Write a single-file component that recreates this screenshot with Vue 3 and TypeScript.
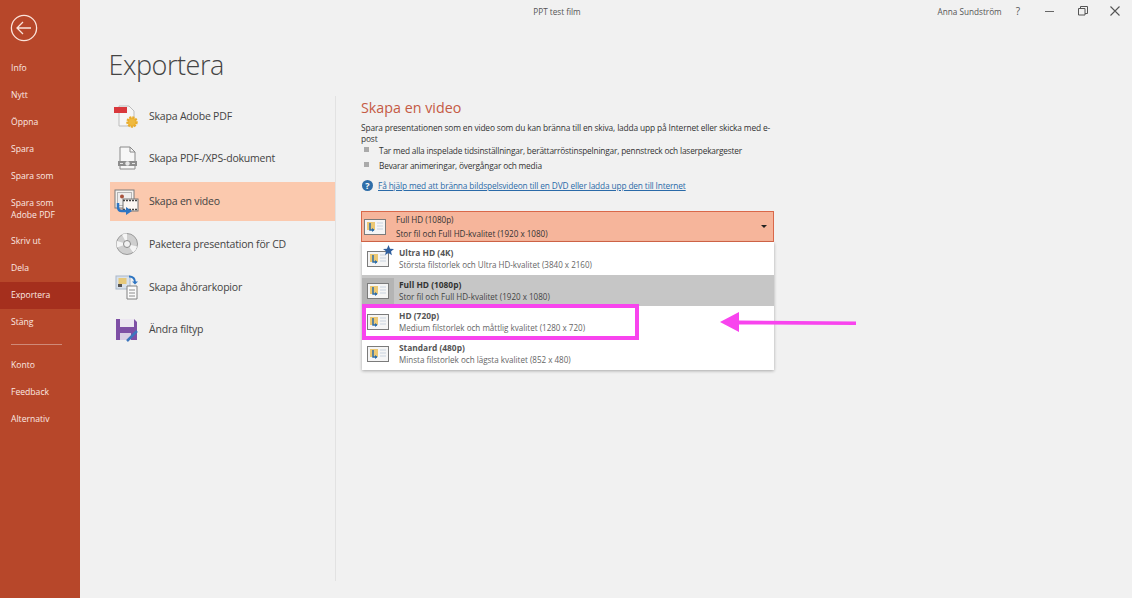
<script setup lang="ts">
interface Nav { label: string; active?: boolean; tall?: boolean }
const navTop: Nav[] = [
  { label: 'Info' }, { label: 'Nytt' }, { label: 'Öppna' }, { label: 'Spara' }, { label: 'Spara som' },
  { label: 'Spara som\nAdobe PDF', tall: true }, { label: 'Skriv ut' }, { label: 'Dela' },
  { label: 'Exportera', active: true }, { label: 'Stäng' },
]
const navBottom: Nav[] = [{ label: 'Konto' }, { label: 'Feedback' }, { label: 'Alternativ' }]
const actions = [
  { id: 'pdf', label: 'Skapa Adobe PDF' },
  { id: 'xps', label: 'Skapa PDF-/XPS-dokument' },
  { id: 'video', label: 'Skapa en video', active: true },
  { id: 'cd', label: 'Paketera presentation för CD' },
  { id: 'handout', label: 'Skapa åhörarkopior' },
  { id: 'type', label: 'Ändra filtyp' },
]
const options = [
  { title: 'Ultra HD (4K)', sub: 'Största filstorlek och Ultra HD-kvalitet (3840 x 2160)', star: true },
  { title: 'Full HD (1080p)', sub: 'Stor fil och Full HD-kvalitet (1920 x 1080)', selected: true },
  { title: 'HD (720p)', sub: 'Medium filstorlek och måttlig kvalitet (1280 x 720)', marked: true },
  { title: 'Standard (480p)', sub: 'Minsta filstorlek och lägsta kvalitet (852 x 480)' },
]
</script>

<template>
  <div class="app">
    <aside class="side">
      <svg class="back" width="28" height="28" viewBox="0 0 28 28" fill="none" stroke="#fbe3da" stroke-width="1.3">
        <circle cx="14" cy="14" r="12.6" />
        <path d="M7 14h14M13 8l-6 6 6 6" />
      </svg>
      <nav class="nav">
        <div v-for="n in navTop" :key="n.label" class="nav-item" :class="{ on: n.active, tall: n.tall }">{{ n.label }}</div>
        <div class="nav-rule"></div>
        <div v-for="n in navBottom" :key="n.label" class="nav-item">{{ n.label }}</div>
      </nav>
    </aside>

    <main class="main">
      <header class="bar">
        <div class="doc">PPT test film</div>
        <div class="win">
          <span class="user">Anna Sundström</span>
          <span class="q">?</span>
          <svg width="10" height="10" viewBox="0 0 10 10" class="min"><path d="M0 5.5h9" stroke="#666" /></svg>
          <svg width="10" height="10" viewBox="0 0 10 10" class="max" fill="none" stroke="#555"><path d="M.5 2.5h6.5v6.5H.5zM2.5 2.5V.5h7v7H7" /></svg>
          <svg width="10" height="10" viewBox="0 0 10 10" class="close" stroke="#555" stroke-width="1.1"><path d="M.5.5l9 9M9.5.5l-9 9" /></svg>
        </div>
      </header>

      <h1 class="title">Exportera</h1>

      <div class="cols">
        <ul class="actions">
          <li v-for="a in actions" :key="a.id" class="action" :class="{ on: a.active }">
            <svg class="aicon" width="28" height="28" viewBox="0 0 28 28">
              <template v-if="a.id === 'pdf'">
                <path d="M7 4h10l5 5v15H7z" fill="#f6f6f6" stroke="#bdbdbd" />
                <rect x="2" y="5" width="13" height="6" fill="#d9383c" />
                <circle cx="20" cy="20" r="4.500" fill="#efb93f" stroke="#e9ac2c" stroke-width="2.500" stroke-dasharray="2 1" />
              </template>
              <template v-else-if="a.id === 'xps'">
                <path d="M8 3h10l5 5v17H8z" fill="#f7f7f7" stroke="#8a8a8a" />
                <path d="M18 3v5h5" fill="none" stroke="#8a8a8a" />
                <rect x="6" y="17" width="19" height="5" fill="#8d8d8d" />
                <circle cx="15.500" cy="19.500" r="2.200" fill="#e6e6e6" />
                <path d="M8 19.500h3M20 19.500h3" stroke="#e6e6e6" />
              </template>
              <template v-else-if="a.id === 'video'">
                <rect x="3" y="3" width="19" height="18" fill="#f4f2ef" stroke="#7d7d7d" />
                <rect x="5.500" y="5.500" width="14" height="13" fill="#eee" stroke="#b5b5b5" />
                <circle cx="10" cy="9.500" r="2" fill="#a8533e" />
                <rect x="11" y="12" width="15" height="12" fill="#fbf6f2" stroke="#777" />
                <path d="M11 13.500h15M11 22.500h15" stroke="#444" stroke-width="1.500" stroke-dasharray="2 1" />
                <path d="M6 16v4q0 4 4 4h5" fill="none" stroke="#2e75c2" stroke-width="2.500" />
                <path d="M14 20l6 4-6 4z" fill="#2e75c2" />
              </template>
              <template v-else-if="a.id === 'cd'">
                <circle cx="15" cy="14" r="10.500" fill="#cfcfcf" stroke="#9a9a9a" />
                <path d="M15 14L10 4.700A10.500 10.500 0 0 1 15 3.500zM15 14l10.200 2.500a10.500 10.500 0 0 1-4 6zM15 14L5 11a10.500 10.500 0 0 0 0 6.500z" fill="#f5f5f5" />
                <circle cx="15" cy="14" r="3.500" fill="#f1f1f1" stroke="#8a8a8a" />
              </template>
              <template v-else-if="a.id === 'handout'">
                <rect x="4" y="3" width="14" height="13" fill="#d8e1ec" stroke="#a9b8c9" />
                <rect x="6.500" y="5" width="8" height="6" fill="#e6c97b" />
                <rect x="6" y="11" width="4" height="3" fill="#555" />
                <path d="M17 3.500q6 0 6 6" fill="none" stroke="#2e75c2" stroke-width="2" />
                <path d="M20 8.500l3 3 3-3z" fill="#2e75c2" />
                <path d="M15 13h10v13H15z" fill="#fbfbfb" stroke="#808080" />
                <path d="M17 17h6M17 20h6M17 23h6" stroke="#8c8c8c" />
              </template>
              <template v-else>
                <path d="M4 4h18l3 3v18H4z" fill="#7e4fa5" />
                <rect x="8" y="4" width="14" height="8" fill="#ece6f1" />
                <rect x="8" y="18" width="11" height="7" fill="#d9cde4" />
                <path d="M15 26l10-10" stroke="#3d76bd" stroke-width="2.500" />
              </template>
            </svg>
            <span>{{ a.label }}</span>
          </li>
        </ul>

        <section class="panel">
          <h2 class="ph">Skapa en video</h2>
          <p class="desc">Spara presentationen som en video som du kan bränna till en skiva, ladda upp på Internet eller skicka med e-post</p>
          <ul class="bullets">
            <li>Tar med alla inspelade tidsinställningar, berättarröstinspelningar, pennstreck och laserpekargester</li>
            <li>Bevarar animeringar, övergångar och media</li>
          </ul>
          <div class="help">
            <span class="qm">?</span>
            <a class="link">Få hjälp med att bränna bildspelsvideon till en DVD eller ladda upp den till Internet</a>
          </div>

          <div class="dd">
            <div class="dd-head">
              <svg class="thumb" width="22" height="16" viewBox="0 0 22 16">
                <rect x=".5" y=".5" width="21" height="15" fill="#f5f5f5" stroke="#7b7b7b" />
                <rect x="3" y="3" width="8" height="8" fill="#ecc873" />
                <path d="M6 4v7h4" fill="none" stroke="#2e6da8" stroke-width="1.500" />
                <path d="M8 9l2.500 2L8 13z" fill="#2e6da8" />
                <path d="M13 4h6M13 7h6M13 10h6" stroke="#c9d3df" />
              </svg>
              <div class="dd-txt">
                <div>Full HD (1080p)</div>
                <div>Stor fil och Full HD-kvalitet (1920 x 1080)</div>
              </div>
              <span class="caret"></span>
            </div>
            <div class="dd-list">
              <div v-for="o in options" :key="o.title" class="opt" :class="{ sel: o.selected }">
                <span class="thumb-wrap" :class="{ boxed: o.selected }">
                  <svg class="thumb" width="22" height="16" viewBox="0 0 22 16">
                    <rect x=".5" y=".5" width="21" height="15" fill="#f5f5f5" stroke="#7b7b7b" />
                    <rect x="3" y="3" width="8" height="8" fill="#ecc873" />
                    <path d="M6 4v7h4" fill="none" stroke="#2e6da8" stroke-width="1.500" />
                    <path d="M8 9l2.500 2L8 13z" fill="#2e6da8" />
                    <path d="M13 4h6M13 7h6M13 10h6" stroke="#c9d3df" />
                  </svg>
                  <svg v-if="o.star" class="star" width="11" height="11" viewBox="0 0 10 10"><path d="M5 0l1.400 3.300 3.600.3-2.700 2.300.8 3.500L5 7.300 1.900 9.100l.8-3.500L0 3.600l3.600-.3z" fill="#2f5f9e" /></svg>
                </span>
                <div class="opt-txt">
                  <div class="ot">{{ o.title }}</div>
                  <div class="os">{{ o.sub }}</div>
                </div>
                <div v-if="o.marked" class="mark"></div>
              </div>
            </div>
            <svg class="arrow" width="137" height="22" viewBox="0 0 137 22">
              <path d="M0 11L19 1V9.500L136 10.500V14L19 13.500V21z" fill="#f844ee" />
            </svg>
          </div>
        </section>
      </div>
    </main>
  </div>
</template>

<style>
html, body { margin: 0; background: #f1f1f1; }
</style>

<style scoped>
.app {
  display: flex; width: 1132px; height: 598px; overflow: hidden;
  font-family: "Open Sans", "Noto Sans", sans-serif; color: #444; background: #f1f1f1;
}
.side { width: 80px; flex: none; background: #b7472a; box-sizing: border-box; padding-top: 14px; }
.back { display: block; margin-left: 10px; }
.nav { margin-top: 13px; }
.nav-item {
  height: 27px; line-height: 27px; padding-left: 11px; font-size: 8.600px; color: #fbe9e3; white-space: pre-line;
}
.nav-item.tall { height: 38px; line-height: 12px; padding-top: 7px; box-sizing: border-box; }
.nav-item.on { background: #a52f1d; }
.nav-rule { height: 1px; margin: 8px 18px 7px 11px; background: #cf8a78; }

.main { flex: 1; min-width: 0; }
.bar { position: relative; height: 22px; }
.doc { padding-top: 6px; text-align: center; font-size: 8.200px; color: #555; transform: translateX(-49px); }
.win { position: absolute; top: 0; right: 0; height: 22px; display: flex; align-items: center; color: #555; font-size: 8.200px; }
.user { margin-right: 14px; }
.q { margin-right: 25px; font-size: 10px; }
.min { margin-right: 23px; }
.max { margin-right: 22px; }
.close { margin-right: 12px; }

.title { margin: 23px 0 0 28.500px; font-size: 27px; line-height: 39px; font-weight: 300; color: #444; letter-spacing: -.45px; }
.cols { display: flex; margin: 12px 0 0 30px; }
.actions { list-style: none; margin: 0; padding: 0; width: 225px; height: 485px; border-right: 1px solid #e2e2e2; }
.action {
  display: flex; align-items: center; height: 39px; margin-bottom: 3.800px; padding-left: 2px;
  font-size: 10.500px; letter-spacing: -.2px; color: #444;
}
.action.on { background: #fbc9ae; }
.aicon { flex: none; }
.action span { margin-left: 9px; }

.panel { margin-left: 25px; width: 413px; }
.ph { margin: 2px 0 0; font-size: 14.300px; line-height: 20px; font-weight: 400; color: #c55a44; }
.desc { margin: 4px 0 0; width: 410px; font-size: 8.400px; letter-spacing: -.15px; line-height: 11px; color: #333; }
.bullets { list-style: none; margin: -1.500px 0 0; padding: 0; font-size: 8.300px; letter-spacing: -.18px; color: #333; }
.bullets li { position: relative; height: 15px; line-height: 15px; padding-left: 18px; }
.bullets li::before { content: ""; position: absolute; left: 3px; top: 4px; width: 5px; height: 5px; background: #aaa; }
.help { display: flex; align-items: center; margin-top: 5.500px; height: 14px; }
.qm {
  width: 11px; height: 11px; border-radius: 50%; background: #2e6da8; color: #fff; font-size: 9px; line-height: 11px;
  text-align: center; font-weight: 700; margin-left: 1px;
}
.link { margin-left: 5px; font-size: 8.300px; letter-spacing: -.13px; color: #2a6aa8; text-decoration: underline; }

.dd { position: relative; margin-top: 19px; }
.dd-head {
  display: flex; align-items: center; height: 31px; box-sizing: border-box;
  background: #f6b59b; border: 1px solid #d9684a; padding: 0 6px 0 2px;
}
.dd-txt { flex: 1; margin-left: 10px; font-size: 8.100px; line-height: 14px; color: #333; }
.caret { width: 0; height: 0; border: 3px solid transparent; border-top: 3px solid #222; border-bottom: 0; }
.dd-list { background: #fff; box-shadow: 0 1px 3px rgba(0,0,0,.3); margin-left: 1px; width: 412px; padding-top: 1px; }
.opt { position: relative; display: flex; align-items: center; height: 32px; padding-left: 5px; box-sizing: border-box; }
.opt.sel { background: #c6c6c6; height: 31px; }
.opt-txt { margin-left: 10px; line-height: 12px; }
.ot { font-size: 8.400px; font-weight: 700; color: #555; }
.os { font-size: 8.050px; color: #666; }
.opt.sel .ot { color: #333; }
.opt.sel .os { color: #444; }
.thumb { display: block; flex: none; }
.thumb-wrap { position: relative; display: block; flex: none; }
.thumb-wrap.boxed { box-shadow: 0 0 0 5px #b4b4b4; }
.star { position: absolute; right: -5px; top: -6px; }
.mark {
  position: absolute; left: 0; top: -2px; width: 277px; height: 36px; box-sizing: border-box;
  border: 4px solid #f844ee;
}
.arrow { position: absolute; left: 359px; top: 100px; }
</style>
